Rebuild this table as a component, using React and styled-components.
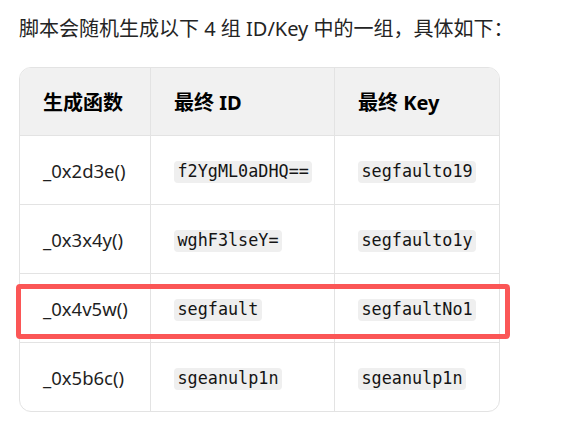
import React from 'react'
import { createGlobalStyle, styled } from 'styled-components'

const GlobalStyle = createGlobalStyle`
  html, body {
    margin: 0;
    padding: 0;
    background: #ffffff;
  }
  body {
    font-family: "Noto Sans", "Noto Sans CJK SC", sans-serif;
    color: #1f1f1f;
  }
`

const Page = styled.div`
  width: 573px;
  height: 440px;
  box-sizing: border-box;
  padding: 14px 0 0 19px;
  display: flex;
  flex-direction: column;
  gap: 23px;
`

const Intro = styled.p`
  margin: 0;
  font-size: 20px;
  line-height: 30px;
  color: #242424;
`

const TableArea = styled.div`
  position: relative;
  width: 481px;
`

const Frame = styled.div`
  border: 1px solid #e3e3e3;
  border-radius: 12px;
  overflow: hidden;
`

const Grid = styled.table`
  width: 479px;
  table-layout: fixed;
  border-collapse: separate;
  border-spacing: 0;
`

const HeadCell = styled.th`
  height: 67px;
  padding: 0 0 0 23px;
  background: #f1f1f1;
  text-align: left;
  font-size: 20px;
  font-weight: 700;
  color: #000;
  border-bottom: 1px solid #e3e3e3;
  border-left: ${({ $first }) => ($first ? 'none' : '1px solid #e3e3e3')};
  white-space: nowrap;
`

const Cell = styled.td`
  height: 68px;
  padding: 0 0 0 23px;
  font-size: 18.5px;
  color: #1f1f1f;
  vertical-align: middle;
  border-bottom: ${({ $last }) => ($last ? 'none' : '1px solid #e3e3e3')};
  border-left: ${({ $first }) => ($first ? 'none' : '1px solid #e3e3e3')};
  white-space: nowrap;
`

const Code = styled.code`
  display: inline-block;
  font-family: "DejaVu Sans Mono", monospace;
  font-size: 16.8px;
  line-height: 17px;
  padding: 2.5px 3.5px;
  border-radius: 4px;
  background: #efefef;
  color: #141414;
`

const Highlight = styled.div`
  position: absolute;
  left: -3px;
  top: 217px;
  width: 494px;
  height: 55px;
  box-sizing: border-box;
  border: 5px solid #fb5656;
  border-radius: 4px;
  pointer-events: none;
`

const rows = [
  { fn: '_0x2d3e()', id: 'f2YgML0aDHQ==', key: 'segfaulto19' },
  { fn: '_0x3x4y()', id: 'wghF3lseY=', key: 'segfaulto1y' },
  { fn: '_0x4v5w()', id: 'segfault', key: 'segfaultNo1' },
  { fn: '_0x5b6c()', id: 'sgeanulp1n', key: 'sgeanulp1n' },
]

export default function App() {
  return (
    <>
      <GlobalStyle />
      <Page>
        <Intro>脚本会随机生成以下 4 组 ID/Key 中的一组，具体如下：</Intro>
        <TableArea>
          <Frame>
            <Grid>
              <colgroup>
                <col style={{ width: 130 }} />
                <col style={{ width: 184 }} />
                <col style={{ width: 165 }} />
              </colgroup>
              <thead>
                <tr>
                  <HeadCell $first>生成函数</HeadCell>
                  <HeadCell>最终 ID</HeadCell>
                  <HeadCell>最终 Key</HeadCell>
                </tr>
              </thead>
              <tbody>
                {rows.map((r, i) => (
                  <tr key={r.fn}>
                    <Cell $first $last={i === rows.length - 1}>{r.fn}</Cell>
                    <Cell $last={i === rows.length - 1}><Code>{r.id}</Code></Cell>
                    <Cell $last={i === rows.length - 1}><Code>{r.key}</Code></Cell>
                  </tr>
                ))}
              </tbody>
            </Grid>
          </Frame>
          <Highlight />
        </TableArea>
      </Page>
    </>
  )
}
